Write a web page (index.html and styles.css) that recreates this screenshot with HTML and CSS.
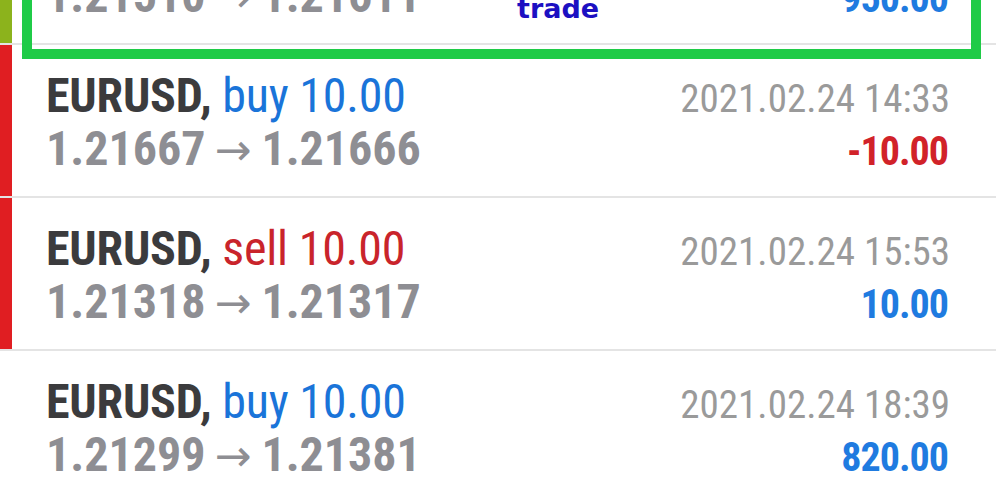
FILE: index.html
```html
<!DOCTYPE html>
<html lang="en">
<head>
    <meta charset="UTF-8">
    <meta name="viewport" content="width=device-width, initial-scale=1.0">
    <title>History</title>
    <link rel="stylesheet" href="styles.css">
</head>
<body>
    <div class="history">
        <div class="deal">
            <div class="bar bar-green"></div>
            <div class="deal-body">
                <div class="line">
                    <span class="title">EURUSD, <span class="buy">buy 10.00</span></span>
                    <span class="date">2021.02.24 11:02</span>
                </div>
                <div class="line">
                    <span class="prices">1.21510<span class="arrow">&rarr;</span>1.21611</span>
                    <span class="profit">950.00</span>
                </div>
            </div>
            <div class="mark"></div>
            <span class="mark-label">trade</span>
        </div>

        <div class="deal">
            <div class="bar bar-red"></div>
            <div class="deal-body">
                <div class="line">
                    <span class="title">EURUSD, <span class="buy">buy 10.00</span></span>
                    <span class="date">2021.02.24 14:33</span>
                </div>
                <div class="line">
                    <span class="prices">1.21667<span class="arrow">&rarr;</span>1.21666</span>
                    <span class="profit loss">-10.00</span>
                </div>
            </div>
        </div>

        <div class="deal">
            <div class="bar bar-red"></div>
            <div class="deal-body">
                <div class="line">
                    <span class="title">EURUSD, <span class="sell">sell 10.00</span></span>
                    <span class="date">2021.02.24 15:53</span>
                </div>
                <div class="line">
                    <span class="prices">1.21318<span class="arrow">&rarr;</span>1.21317</span>
                    <span class="profit">10.00</span>
                </div>
            </div>
        </div>

        <div class="deal">
            <div class="bar"></div>
            <div class="deal-body">
                <div class="line">
                    <span class="title">EURUSD, <span class="buy">buy 10.00</span></span>
                    <span class="date">2021.02.24 18:39</span>
                </div>
                <div class="line">
                    <span class="prices">1.21299<span class="arrow">&rarr;</span>1.21381</span>
                    <span class="profit">820.00</span>
                </div>
            </div>
        </div>
    </div>
</body>
</html>
```

FILE: styles.css
```css
body {
    margin: 0;
    padding: 0;
    background-color: #fff;
    font-family: "Roboto Condensed", Roboto, sans-serif;
    overflow: hidden;
}
.history {
    margin-top: -108px;
}
.deal {
    position: relative;
    display: flex;
    height: 151px;
    border-bottom: 2px solid #e4e4e4;
}
.bar {
    width: 12px;
    flex-shrink: 0;
}
.bar-red {
    background-color: #e01e22;
}
.bar-green {
    background-color: #8cb31c;
}
.deal-body {
    flex: 1;
    padding: 24px 46px 0 34px;
}
.line {
    display: flex;
    justify-content: space-between;
    align-items: baseline;
    height: 53px;
    line-height: 53px;
    white-space: nowrap;
}
.title {
    font-size: 48px;
    font-weight: 700;
    color: #3b3b3d;
    letter-spacing: -0.2px;
}
.buy {
    font-weight: 400;
    color: #1a74d9;
}
.sell {
    font-weight: 400;
    color: #c9242b;
}
.prices {
    font-size: 48px;
    font-weight: 700;
    color: #8e8e93;
}
.arrow {
    margin: 0 10px 0 9px;
    font-family: "DejaVu Sans", sans-serif;
    font-size: 44px;
    font-weight: 400;
}
.date {
    font-size: 39px;
    color: #9a9a9a;
}
.profit {
    font-size: 40px;
    font-weight: 700;
    color: #1f7be0;
    letter-spacing: -1px;
    margin-right: 2px;
}
.loss {
    color: #d12229;
}
.mark {
    position: absolute;
    left: 22px;
    right: 15px;
    top: 20px;
    bottom: -16px;
    border: 10px solid #1fcb47;
}
.mark-label {
    position: absolute;
    left: 517px;
    bottom: 19px;
    font-family: "DejaVu Sans", sans-serif;
    font-size: 27px;
    font-weight: 700;
    line-height: 30px;
    color: #1c10c2;
}
```
